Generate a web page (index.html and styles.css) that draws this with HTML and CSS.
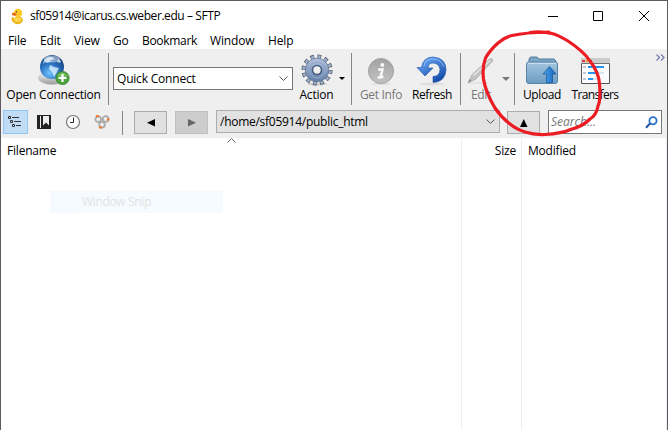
FILE: index.html
```html
<!DOCTYPE html>
<html lang="en"><head><meta charset="utf-8"><title>sf05914@icarus.cs.weber.edu – SFTP</title>
<link rel="stylesheet" href="styles.css"></head>
<body>
<main class="window">
<header class="titlebar">
<svg class="duck" width="14" height="17" viewBox="0 0 14 17"><path d="M1 9 4 10Q6 6 10 9Q14 12 10 15Q6 18 2 14Q0 12 1 9" fill="#edb313"/><circle cx="7" cy="5" r="4.3" fill="#ffc928"/><path d="M3 10Q7 8 11 11Q10 14 6 14Q2 13 3 10" fill="#ffd653"/><path d="M1 5Q4 4 6 6L4 8 1 7" fill="#ed6b20"/><circle cx="5.5" cy="3.8" r=".7" fill="#543b18"/></svg>
<h1 class="title">sf05914@icarus.cs.weber.edu – SFTP</h1>
<svg class="controls" width="100" height="14" viewBox="0 0 100 14" fill="none" stroke="#000"><path d="M0 7.5H10M45.5 2.5H54.5V11.5H45.5ZM91 2 101 12M101 2 91 12"/></svg>
</header>
<nav class="menu"><span class="m-file">File</span><span class="m-edit">Edit</span><span class="m-view">View</span><span class="m-go">Go</span><span class="m-book">Bookmark</span><span class="m-win">Window</span><span class="m-help">Help</span></nav>
<section class="toolbar">
<div class="tool t-open">
<svg width="32" height="32" viewBox="0 0 32 32"><defs><radialGradient id="globe" cx=".4" cy=".75" r=".75"><stop stop-color="#72c5ff"/><stop offset=".55" stop-color="#2870bd"/><stop offset="1" stop-color="#174178"/></radialGradient><linearGradient id="stand" x2="0" y2="1"><stop stop-color="#fff"/><stop offset="1" stop-color="#999"/></linearGradient></defs><ellipse cx="14" cy="24" rx="13.5" ry="6.5" fill="url(#stand)" stroke="#bbb" stroke-width=".6"/><circle cx="14" cy="13" r="12" fill="url(#globe)"/><path d="M6 6Q10 2 14 3L17 5 13 6 12 8 9 9 7 8 5 10ZM12 11 16 13 21 14 19 18 16 23 14 18 11 15ZM20 5 23 7 22 9 19 8Z" fill="#e7f5ff" opacity=".75"/><ellipse cx="14" cy="5" rx="8" ry="3.5" fill="#fff" opacity=".45"/><circle cx="24.5" cy="24" r="6.6" fill="#4aa43c" stroke="#348030" stroke-width=".8"/><path d="M19 22Q24 15 30 22Q25 24 19 22" fill="#a1d981" opacity=".5"/><path d="M24.5 20V28M20.5 24H28.5" stroke="#fff" stroke-width="2.2"/></svg><span>Open Connection</span></div>
<i class="rule"></i>
<div class="select quick"><span>Quick Connect</span><svg width="9" height="6" viewBox="0 0 9 6"><path d="M.5.5 4.5 4.5 8.5.5" fill="none" stroke="#555"/></svg></div>
<div class="tool t-action">
<svg width="32" height="32" viewBox="0 0 32 32"><defs><linearGradient id="gear" x2="0" y2="1"><stop stop-color="#b3c4df"/><stop offset="1" stop-color="#617da8"/></linearGradient></defs><ellipse cx="16" cy="30" rx="10" ry="1.5" fill="#ccc"/><circle cx="16" cy="16" r="13.3" fill="none" stroke="#5b6675" stroke-width="4.6" stroke-dasharray="3.8 3.164"/><circle cx="16" cy="16" r="13.1" fill="none" stroke="#9caec9" stroke-width="3.2" stroke-dasharray="2.5 4.359" stroke-dashoffset="-.65"/><circle cx="16" cy="16" r="11.8" fill="url(#gear)" stroke="#60718b" stroke-width=".7"/><circle cx="16" cy="16" r="8" fill="none" stroke="#90a7c8"/><circle cx="16" cy="16" r="4.5" fill="#efefef" stroke="#465c7e" stroke-width="1.6"/></svg><span>Action</span></div>
<i class="drop"></i><i class="rule r-two"></i>
<div class="tool t-info disabled">
<svg width="32" height="32" viewBox="0 0 32 32"><defs><linearGradient id="info" x2="0" y2="1"><stop stop-color="#a2a2a2"/><stop offset="1" stop-color="#c3c3c3"/></linearGradient></defs><ellipse cx="16" cy="30" rx="10" ry="1.3" fill="#e2e2e2"/><circle cx="16" cy="17" r="12.5" fill="url(#info)" stroke="#a0a0a0"/><circle cx="17.3" cy="11" r="2" fill="#f8f8f8"/><path d="M13 15.5H17.5L15.5 23H18.5M12.5 23.5H16" stroke="#f8f8f8" stroke-width="2.5" fill="none"/></svg><span>Get Info</span></div>
<div class="tool t-refresh">
<svg width="32" height="32" viewBox="0 0 32 32"><defs><linearGradient id="refresh" x2=".6" y2="1"><stop stop-color="#73b1ff"/><stop offset="1" stop-color="#174fab"/></linearGradient></defs><ellipse cx="16" cy="30" rx="13" ry="1.5" fill="#ddd"/><path d="M5.5 13.5Q7 3 17 3Q30 4 30 16Q29 28 17 28.5V22.5Q24 22 24 15.5Q23 9 17 9Q12 9 12 14H17L9 22 1 13.5Z" fill="url(#refresh)" stroke="#2b5eb1" stroke-width=".7"/><path d="M8 12Q9 5 17 5Q25 5 28 13" stroke="#a2cdff" fill="none" opacity=".7"/></svg><span>Refresh</span></div>
<i class="rule r-three"></i>
<div class="tool t-edit disabled">
<svg width="32" height="32" viewBox="0 0 32 32"><ellipse cx="14" cy="29" rx="11" ry="1" fill="#e2e2e2"/><path d="M3 29 7 20.5 24 5.5Q27 3 28 6.5L11 25Z" fill="#c2c2c2" stroke="#a9a9a9" stroke-width=".7"/><path d="M8.5 21.5 25 6.5" stroke="#e5e5e5" stroke-width="1.5"/><path d="M3 29 5 25 6.5 26.5Z" fill="#888"/></svg><span>Edit</span></div>
<i class="drop gray"></i><i class="rule r-four"></i>
<div class="tool t-upload">
<svg width="32" height="32" viewBox="0 0 32 32"><defs><linearGradient id="folder" x2="0" y2="1"><stop stop-color="#a5c5df"/><stop offset="1" stop-color="#6c9bc1"/></linearGradient><linearGradient id="up" x2="1"><stop stop-color="#50aaf2"/><stop offset="1" stop-color="#145db5"/></linearGradient></defs><path d="M3 11V5L4.5 3H11L13 5H28L30 7V11" fill="#7da6c6" stroke="#557a98"/><path d="M.5 10Q.5 8 2.5 8H29.5Q31.5 8 31.5 10V27Q31.5 29.5 29 29.5H3Q.5 29.5 .5 27Z" fill="url(#folder)" stroke="#5885a8"/><path d="M2 9.5H30" stroke="#c4dff4"/><path d="M23.5 12.5 30 20H26.5V28.5H20.5V20H17Z" fill="url(#up)" stroke="#185da0" stroke-width=".8"/></svg><span>Upload</span></div>
<div class="tool t-transfers">
<svg width="32" height="32" viewBox="0 0 32 32"><path d="M2.5 4.5H30.5V29.5H2.5Z" fill="#fafcff" stroke="#555"/><path d="M2 4H31V9H2Z" fill="#ccc"/><path d="M2 9.5H31" stroke="#777"/><path d="M3 7H6" stroke="#e73345" stroke-width="2"/><path d="M7 7H9" stroke="#f69e25" stroke-width="2"/><path d="M11 7H13" stroke="#32b657" stroke-width="2"/><path d="M4 13H7M4 19H7M4 25H7" stroke="#c2c9d0" stroke-width="2"/><path d="M9 13H25M9 19H19M9 25H14" stroke="#2494ef" stroke-width="2"/><path d="M19 19H25M14 25H19" stroke="#d8e2eb" stroke-width="2"/></svg><span>Transfers</span></div>
<svg class="more" width="9" height="7" viewBox="0 0 9 7"><path d="M.5.5 3.5 3.5.5 6.5M5 .5 8 3.5 5 6.5" fill="none" stroke="#7777ae" stroke-width="1.2"/></svg>
</section>
<section class="navigation">
<div class="view active"><svg width="14" height="14" viewBox="0 0 14 14" fill="none" stroke="#333"><path d="M.5 1.5H2.5V3.5H.5ZM2.5 5.5H4.5V7.5H2.5ZM4.5 9.5H6.5V11.5H4.5ZM4 2.5H11M6 6.5H13M8 10.5H13"/></svg></div>
<svg class="book" width="14" height="15" viewBox="0 0 14 15"><path d="M0 0H14V14H0Z" fill="#222"/><path d="M3.5 1V13" stroke="#eee"/><path d="M6 1H12V10.5L9 7.5 6 10.5Z" fill="#eee"/></svg>
<svg class="clock" width="16" height="16" viewBox="0 0 16 16"><circle cx="8" cy="8" r="6.5" fill="#fff" stroke="#777" stroke-width="1.2"/><path d="M8.5 3.5V8.5H5" fill="none" stroke="#222"/></svg>
<svg class="bonjour" width="16" height="16" viewBox="0 0 16 16" fill="none" stroke="#aaa" stroke-width="1.8"><circle cx="4.2" cy="5.2" r="2.8"/><circle cx="11.6" cy="5" r="2.8"/><circle cx="8" cy="10.7" r="2.8"/><path d="M2 2.2H5M13 5.5H15.5M5 13.5H8" stroke="#f57627" stroke-width="2"/></svg>
<i class="rule"></i>
<div class="button back"><svg width="8" height="8" viewBox="0 0 8 8"><path d="M8 0V7.5L0 3.75Z"/></svg></div>
<div class="button forward"><svg width="8" height="8" viewBox="0 0 8 8"><path d="M0 0V7.5L8 3.75Z" fill="#666"/></svg></div>
<div class="select path"><span>/home/sf05914/public_html</span><svg width="9" height="6" viewBox="0 0 9 6"><path d="M.5.5 4.5 4.5 8.5.5" fill="none" stroke="#555"/></svg></div>
<div class="button parent"><svg width="8" height="8" viewBox="0 0 8 8"><path d="M0 8H7.5L3.75 0Z"/></svg></div>
<div class="search"><span>Search...</span><svg width="13" height="13" viewBox="0 0 13 13" fill="none"><circle cx="8" cy="4.8" r="3.6" stroke="#2873c8" stroke-width="1.8"/><path d="M5 7.5 1 11.7" stroke="#2054a0" stroke-width="2"/></svg></div>
</section>
<section class="files"><div class="name"><span>Filename</span><svg class="sort" width="9" height="5" viewBox="0 0 9 5"><path d="M.5 4.5 4.5.5 8.5 4.5" fill="none" stroke="#666"/></svg><div class="snip">Window Snip</div></div><div class="size">Size</div><div class="modified">Modified</div></section>
<svg class="annotation" width="124" height="110" viewBox="478 28 124 110"><path d="M530 32.5Q541 31 552 33.5C558 35 563 38 568 41C577 47 585 53 590 61C597 70 599 76 599.5 84C600 93 601 100 598 106C597 112 595 116 590 119C585 124 580 127 572 129C563 133 555 134 545 134.5Q534 135 525 132Q516 129 510 124Q501 117 495 108C489 98 485 89 483.500 79Q482 67 485.500 58Q490 50 498 43Q505 37 512 35.500Q525 32.500 549 32" fill="none" stroke="#eb1c24" stroke-width="3.200" stroke-linecap="round" stroke-linejoin="round"/></svg>
</main></body></html>
```
FILE: styles.css
```css
* { box-sizing: border-box; }
body { margin: 0; background: #fff; overflow: hidden; font: 12px/16px "Open Sans", sans-serif; color: #000; }
.window { position: relative; width: 668px; height: 430px; border: 1px solid #5d5b60; border-bottom: 0; display: flex; flex-direction: column; background: #fff; }
svg { display: block; flex: none; }
span { white-space: nowrap; }
.titlebar { height: 30px; flex: none; display: flex; align-items: center; padding-left: 10px; }
.title { margin: 0 0 0 5px; font-size: 12px; font-weight: 400; width: 190px; letter-spacing: -.42px; white-space: nowrap; }
.controls { margin-left: 328px; overflow: visible; }
.menu { height: 18px; display: flex; padding-left: 7px; line-height: 20px; flex: none; letter-spacing: -.15px; }
.m-file { width: 32px; }
.m-edit { width: 34px; }
.m-view { width: 39px; }
.m-go { width: 29px; }
.m-book { width: 68px; letter-spacing: -.3px; }
.m-win { width: 58px; }
.toolbar { height: 57px; flex: none; display: flex; background: #efefef; padding-top: 4px; }
.tool { display: flex; flex-direction: column; align-items: center; height: 53px; flex: none; }
.tool svg { margin-top: 1px; }
.tool span { line-height: 18px; }
.disabled { color: #777; }
.rule { width: 1px; height: 52px; background: #858585; flex: none; }
.t-open { width: 103px; margin-left: 1px; letter-spacing: -.22px; }
.toolbar > .rule:first-of-type { margin-left: 3px; }
.select { display: flex; align-items: center; justify-content: space-between; border: 1px solid #777; padding: 0 4px 0 3px; flex: none; }
.quick { width: 180px; height: 23px; margin: 14px 0 0 4px; background: #fff; letter-spacing: -.2px; }
.t-action { width: 35px; margin-left: 6px; letter-spacing: -.2px; }
.drop { width: 0; height: 0; border: 3px solid transparent; border-top-color: #000; margin: 24px 0 0 5px; flex: none; }
.drop.gray { border-top-color: #777; border-width: 4px; margin: 24px 0 0 8px; }
.r-two { margin-left: 6px; }
.t-info { width: 44px; margin-left: 7px; letter-spacing: -.35px; }
.t-refresh { width: 42px; margin-left: 8px; letter-spacing: -.45px; }
.r-three { margin-left: 7px; }
.t-edit { width: 26px; margin-left: 7px; letter-spacing: -.3px; }
.r-four { margin-left: 4px; }
.t-upload { width: 40px; margin-left: 7px; letter-spacing: -.4px; }
.t-transfers { width: 48px; margin-left: 9px; letter-spacing: -.65px; }
.more { margin: 1px 0 0 37px; }
.navigation { height: 32px; flex: none; display: flex; background: #efefef; padding: 4px 0 0 2px; }
.view { width: 25px; height: 24px; border: 1px solid #90c6f3; background: #c0ddf5; padding: 4px 0 0 4px; }
.book { margin: 5px 0 0 9px; }
.clock { margin: 4px 0 0 14px; }
.bonjour { margin: 4px 0 0 13px; }
.navigation .rule { height: 24px; margin: 1px 0 0 12px; }
.button { display: flex; align-items: center; justify-content: center; width: 33px; height: 23px; border: 1px solid #adadad; background: #e1e1e1; margin-top: 1px; flex: none; }
.back { margin-left: 11px; }
.forward { margin-left: 8px; background: #ccc; border-color: #bfbfbf; }
.path { width: 284px; height: 23px; margin-left: 8px; background: #e1e1e1; border-color: #adadad; letter-spacing: -.27px; }
.parent { margin-left: 7px; }
.search { width: 114px; height: 24px; border: 1px solid #777; background: #fff; margin-left: 8px; display: flex; align-items: center; justify-content: space-between; padding: 0 3px 0 2px; font-style: italic; color: #777; flex: none; }
.files { flex: 1; display: grid; grid-template-columns: 461px 60px 145px; line-height: 26px; letter-spacing: -.2px; }
.files > div { border-right: 1px solid #e8eff7; }
.name { position: relative; padding-left: 6px; }
.sort { position: absolute; left: 226px; top: 0; }
.snip { width: 173px; height: 22px; margin: 27px 0 0 43px; padding-left: 32px; line-height: 22px; letter-spacing: -.35px; color: #e5e2e4; background: linear-gradient(90deg, #f4faff 0 25px, #f5fbff 25px); }
.size { text-align: right; padding-right: 5px; }
.modified { padding-left: 6px; }
.annotation { position: absolute; left: 477px; top: 27px; }
```
